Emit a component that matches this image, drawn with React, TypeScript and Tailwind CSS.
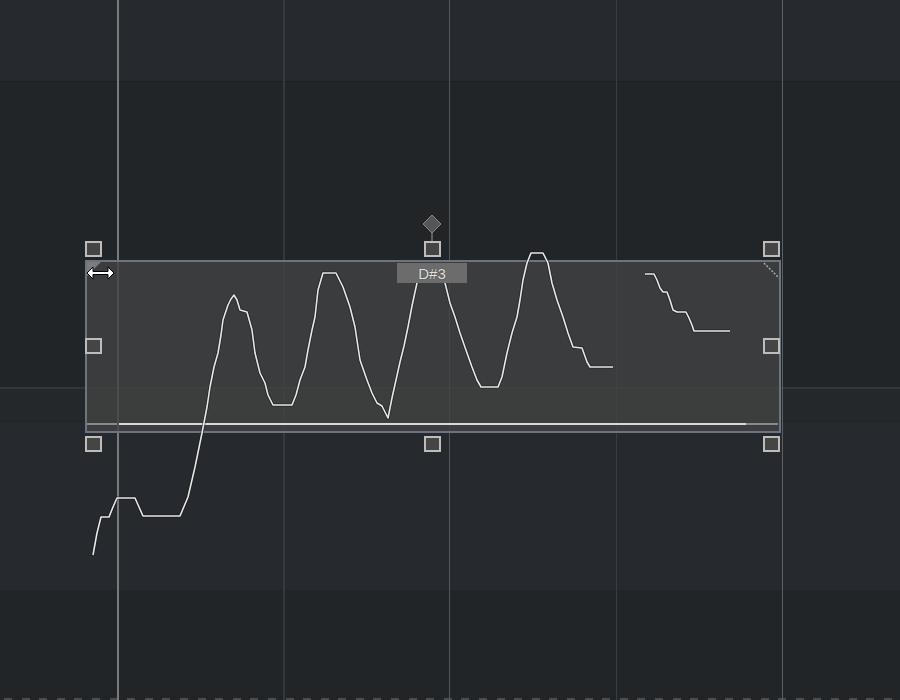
import React from 'react';

// ピッチカーブの座標（画面座標そのまま）
const mainCurve: [number, number][] = [
  [93, 555], [97, 533], [101, 517], [109, 517], [113, 507], [117, 498], [135, 498], [139, 507],
  [143, 516], [180, 516], [188, 497], [195, 467], [202, 433], [207, 407], [210, 387], [214, 367],
  [218, 353], [221, 335], [223, 320], [228, 305], [231, 299], [234, 295], [237, 300], [240, 310],
  [247, 312], [252, 330], [255, 353], [260, 373], [265, 383], [268, 395], [273, 405], [292, 405],
  [296, 395], [300, 380], [305, 367], [308, 350], [312, 330], [315, 317], [318, 290], [323, 273],
  [336, 273], [343, 287], [350, 307], [355, 327], [360, 360], [367, 380], [372, 393], [377, 403],
  [382, 406], [388, 418], [392, 398], [396, 380], [400, 362], [404, 346], [408, 327], [412, 306],
  [415, 292], [417, 283], [421, 270], [425, 266], [439, 266], [443, 272], [445, 283], [450, 303],
  [455, 317], [460, 333], [467, 353], [472, 367], [477, 380], [481, 387], [498, 387], [502, 377],
  [507, 353], [512, 333], [517, 317], [520, 300], [523, 280], [527, 263], [531, 253], [543, 253],
  [548, 263], [552, 283], [557, 300], [563, 317], [568, 333], [573, 347], [582, 348], [587, 362],
  [590, 367], [613, 367],
];

const tailCurve: [number, number][] = [
  [645, 274], [654, 274], [657, 280], [660, 288], [663, 292], [667, 292], [670, 300], [673, 310],
  [677, 312], [686, 312], [689, 318], [692, 325], [694, 331], [730, 331],
];

const toPath = (pts: [number, number][]) =>
  pts.map(([x, y], i) => `${i === 0 ? 'M' : 'L'}${x},${y}`).join(' ');

function Handle({ x, y }: { x: number; y: number }) {
  return (
    <div
      className="absolute w-[17px] h-[16px] border-2 border-[#bdbdbd] bg-[#454545]"
      style={{ left: x, top: y }}
    />
  );
}

export default function App() {
  const handles = [
    { x: 85, y: 241 }, { x: 424, y: 241 }, { x: 763, y: 241 },
    { x: 85, y: 338 }, { x: 763, y: 338 },
    { x: 85, y: 436 }, { x: 424, y: 436 }, { x: 763, y: 436 },
  ];

  return (
    <div className="relative w-[900px] h-[700px] overflow-hidden bg-[#222528] font-['Liberation_Sans',sans-serif]">
      {/* 鍵盤の行 */}
      <div className="flex flex-col h-full">
        <div className="h-[82px] bg-[#262a2e] border-b border-[#1b1e21]" />
        <div className="h-[305px] bg-[#222528]" />
        <div className="h-[34px] bg-[#24282b] border-t-2 border-[#33373a]" />
        <div className="h-[169px] bg-[#26292d] border-t border-[#212427]" />
        <div className="h-[110px] bg-[#222528] flex flex-col justify-end">
          <div className="flex gap-[9.6px] pl-[4px]">
            {Array.from({ length: 52 }).map((_, i) => (
              <div key={i} className="w-[8px] h-[2px] shrink-0 bg-[#4b4b4b]" />
            ))}
          </div>
        </div>
      </div>

      {/* グリッド線 */}
      <div className="absolute inset-0 flex pointer-events-none">
        <div className="w-[117px] shrink-0" />
        <div className="w-[2px] shrink-0 bg-[#7a7a7a]" />
        <div className="w-[164px] shrink-0" />
        <div className="w-[2px] shrink-0 bg-[#35393d]" />
        <div className="w-[164px] shrink-0" />
        <div className="w-px shrink-0 bg-[#53575b]" />
        <div className="w-[166px] shrink-0" />
        <div className="w-px shrink-0 bg-[#393c40]" />
        <div className="w-[165px] shrink-0" />
        <div className="w-px shrink-0 bg-[#5c6064]" />
      </div>

      {/* ノート領域 */}
      <div className="absolute left-[85px] top-[260px] w-[696px] h-[173px] border-2 border-[#6b7480] bg-[#424242]/80 flex flex-col justify-end pb-[6px]">
        <div className="flex h-[2px]">
          <div className="w-[30px] bg-[#8a8a8a]" />
          <div className="w-[2px]" />
          <div className="w-[627px] bg-[#d9d9d9]" />
          <div className="w-[32px] bg-[#8a8a8a]" />
        </div>
      </div>

      {/* ピッチカーブ */}
      <svg className="absolute inset-0 pointer-events-none" width={900} height={700} viewBox="0 0 900 700">
        <polygon points="87,262 101,262 87,276" fill="#7c7c7c" />
        <line x1={764} y1={263} x2={779} y2={278} stroke="#a8a8a8" strokeWidth={1.5} strokeDasharray="2 1.5" />
        {[mainCurve, tailCurve].map((c, i) => (
          <g key={i} fill="none" strokeLinejoin="round">
            <path d={toPath(c)} stroke="#111" strokeOpacity={0.55} strokeWidth={3.2} />
            <path d={toPath(c)} stroke="#e8e8e8" strokeWidth={1.6} />
          </g>
        ))}
        {/* ベロシティの菱形 */}
        <line x1={432} y1={233} x2={432} y2={241} stroke="#9a9a9a" strokeWidth={1} />
        <polygon points="432,215 441,224 432,233 423,224" fill="#555" stroke="#8c8c8c" strokeWidth={1} />
      </svg>

      {/* 音名ラベル */}
      <div className="absolute left-[397px] top-[263px] w-[70px] h-[20px] bg-[#6c6c6c] flex items-center justify-center text-[15px] leading-none text-[#e2e2e2] [text-shadow:0_0_1px_#222]">
        D#3
      </div>

      {handles.map((h, i) => (
        <Handle key={i} x={h.x} y={h.y} />
      ))}

      {/* カーソル */}
      <svg className="absolute left-[86px] top-[266px]" width={29} height={14} viewBox="0 0 29 14">
        <path
          d="M1,7 L7,1 L7,5.5 L22,5.5 L22,1 L28,7 L22,13 L22,8.5 L7,8.5 L7,13 Z"
          fill="#fff"
          stroke="#000"
          strokeWidth={1}
          strokeLinejoin="round"
        />
      </svg>
    </div>
  );
}
